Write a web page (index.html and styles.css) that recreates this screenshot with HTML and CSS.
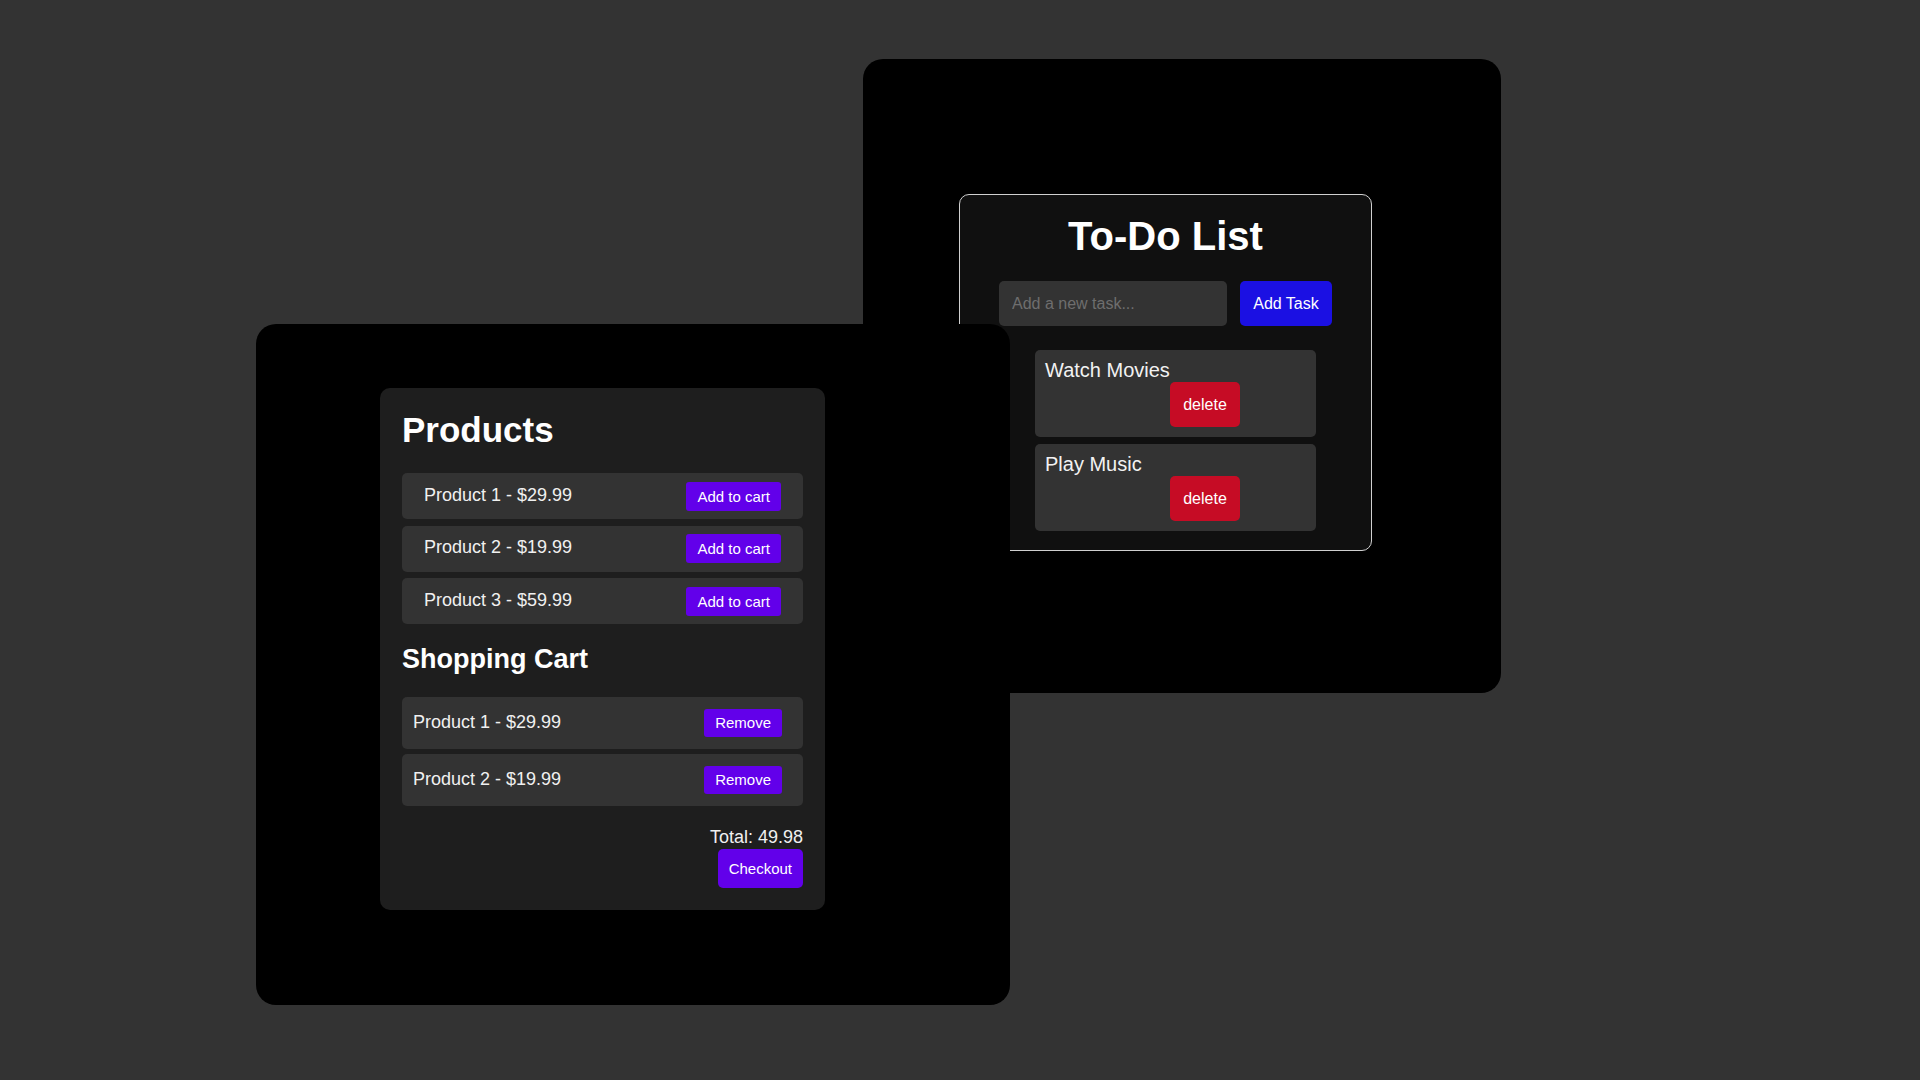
FILE: index.html
```html
<!DOCTYPE html>
<html lang="en">
<head>
<meta charset="utf-8">
<title>Apps</title>
<link rel="stylesheet" href="styles.css">
</head>
<body>
<div class="desktop">
  <section class="window window-todo">
    <div class="todo-card">
      <h1 class="todo-title">To-Do List</h1>
      <div class="todo-form">
        <input class="todo-input" type="text" placeholder="Add a new task...">
        <button class="btn-add-task">Add Task</button>
      </div>
      <ul class="task-list">
        <li class="task">
          <span class="task-text">Watch Movies</span>
          <button class="btn-delete">delete</button>
        </li>
        <li class="task">
          <span class="task-text">Play Music</span>
          <button class="btn-delete">delete</button>
        </li>
      </ul>
    </div>
  </section>

  <section class="window window-shop">
    <div class="shop-card">
      <h2 class="shop-title">Products</h2>
      <div class="product-list">
        <div class="product-row">
          <span>Product 1 - $29.99</span>
          <button class="btn-purple">Add to cart</button>
        </div>
        <div class="product-row">
          <span>Product 2 - $19.99</span>
          <button class="btn-purple">Add to cart</button>
        </div>
        <div class="product-row">
          <span>Product 3 - $59.99</span>
          <button class="btn-purple">Add to cart</button>
        </div>
      </div>
      <h3 class="cart-title">Shopping Cart</h3>
      <div class="cart-list">
        <div class="cart-row">
          <span>Product 1 - $29.99</span>
          <button class="btn-purple">Remove</button>
        </div>
        <div class="cart-row">
          <span>Product 2 - $19.99</span>
          <button class="btn-purple">Remove</button>
        </div>
      </div>
      <div class="cart-footer">
        <div class="cart-total">Total: 49.98</div>
        <button class="btn-purple btn-checkout">Checkout</button>
      </div>
    </div>
  </section>
</div>
</body>
</html>
```

FILE: styles.css
```css
* {
  box-sizing: border-box;
}

html, body {
  margin: 0;
  padding: 0;
}

body {
  background: #333333;
  font-family: "Liberation Sans", Arial, sans-serif;
  color: #ffffff;
  width: 1920px;
  height: 1080px;
  overflow: hidden;
}

.desktop {
  position: relative;
  width: 1920px;
  height: 1080px;
}

.window {
  position: absolute;
  background: #000000;
  border-radius: 20px;
  display: flex;
  align-items: flex-start;
}

/* ---------- To-Do window ---------- */
.window-todo {
  left: 863px;
  top: 59px;
  width: 638px;
  height: 634px;
  padding: 135px 0 0 96px;
}

.todo-card {
  width: 413px;
  background: #101010;
  border: 1px solid #d0d0d0;
  border-radius: 10px;
  padding: 19px 0 19px;
}

.todo-title {
  margin: 0 0 22px;
  text-align: center;
  font-size: 40px;
  font-weight: bold;
  color: #ffffff;
}

.todo-form {
  display: flex;
  justify-content: center;
  gap: 13px;
}

.todo-input {
  width: 228px;
  height: 45px;
  background: #333333;
  border: none;
  border-radius: 5px;
  padding: 0 13px;
  font-family: inherit;
  font-size: 16px;
  color: #eeeeee;
  outline: none;
}

.todo-input::placeholder {
  color: #6e6e6e;
}

.btn-add-task {
  width: 92px;
  height: 45px;
  background: #1b10e3;
  color: #ffffff;
  border: none;
  border-radius: 5px;
  font-family: inherit;
  font-size: 16px;
  padding: 0;
}

.task-list {
  list-style: none;
  margin: 24px 0 0 75px;
  padding: 0;
  width: 281px;
  display: flex;
  flex-direction: column;
  gap: 7px;
}

.task {
  background: #333333;
  border-radius: 5px;
  padding: 9px 10px 10px;
  display: flex;
  flex-direction: column;
  align-items: flex-start;
}

.task-text {
  font-size: 20px;
  color: #f2f2f2;
}

.btn-delete {
  margin-left: 125px;
  width: 70px;
  height: 45px;
  background: #c60c25;
  color: #ffffff;
  border: none;
  border-radius: 5px;
  font-family: inherit;
  font-size: 16px;
  padding: 0;
}

/* ---------- Shop window ---------- */
.window-shop {
  left: 256px;
  top: 324px;
  width: 754px;
  height: 681px;
  padding: 64px 0 0 124px;
}

.shop-card {
  width: 445px;
  background: #1e1e1e;
  border-radius: 10px;
  padding: 22px;
}

.shop-title {
  margin: 0 0 23px;
  font-size: 35px;
  font-weight: bold;
  color: #ffffff;
}

.product-list,
.cart-list {
  display: flex;
  flex-direction: column;
}

.product-list {
  gap: 6.5px;
}

.cart-list {
  gap: 5px;
}

.product-row,
.cart-row {
  display: flex;
  align-items: center;
  justify-content: space-between;
  background: #333333;
  border-radius: 5px;
  font-size: 18px;
  color: #f0f0f0;
}

.product-row {
  height: 46px;
  padding: 0 22px;
}

.product-row span {
  margin-top: -2px;
}

.cart-row {
  height: 52px;
  padding: 0 21px 0 11px;
}

.cart-row span {
  margin-top: -1px;
}

.btn-purple {
  background: #6200ea;
  color: #ffffff;
  border: none;
  border-radius: 3px;
  font-family: inherit;
  font-size: 15px;
  padding: 6px 11px;
  line-height: normal;
}

.cart-row .btn-purple {
  padding: 5px 11px 6px;
}

.cart-title {
  margin: 20px 0 22px;
  font-size: 27px;
  font-weight: bold;
  color: #ffffff;
}

.cart-footer {
  margin-top: 21px;
  display: flex;
  flex-direction: column;
  align-items: flex-end;
  gap: 1px;
}

.cart-total {
  font-size: 18px;
  color: #f0f0f0;
}

.btn-checkout {
  border-radius: 5px;
  padding: 11px;
}
```
